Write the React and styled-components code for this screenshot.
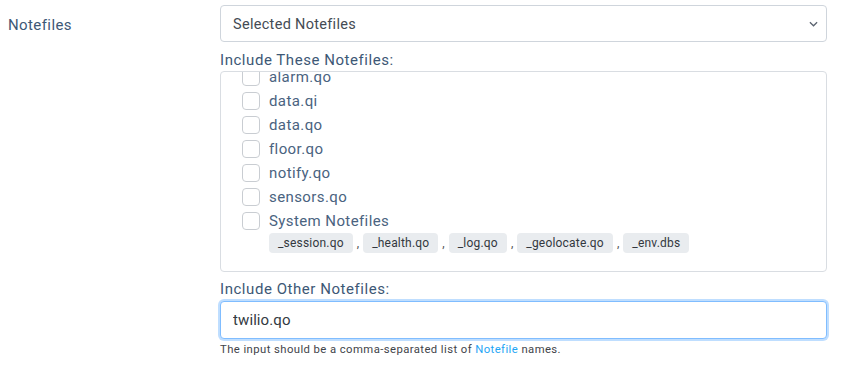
import React, { useEffect, useRef } from 'react'
import styled, { createGlobalStyle } from 'styled-components'

const notefiles = ['alarm.qo', 'data.qi', 'data.qo', 'floor.qo', 'notify.qo', 'sensors.qo']
const systemFiles = ['_session.qo', '_health.qo', '_log.qo', '_geolocate.qo', '_env.dbs']

const App = () => {
  const listRef = useRef(null)

  useEffect(() => {
    if (listRef.current) listRef.current.scrollTop = 15
  }, [])

  return (
    <>
      <GlobalStyle />
      <FormRow>
        <Label>Notefiles</Label>
        <Fields>
          <SelectWrap>
            <Select defaultValue="selected">
              <option value="all">All Notefiles</option>
              <option value="selected">Selected Notefiles</option>
            </Select>
            <Chevron viewBox="0 0 10 6">
              <path d="M1 1l4 4 4-4" fill="none" stroke="#5b6470" strokeWidth="1.4" />
            </Chevron>
          </SelectWrap>

          <SubLabel>Include These Notefiles:</SubLabel>
          <ListBox ref={listRef}>
            <ListInner>
              {notefiles.map((name) => (
                <CheckRow key={name}>
                  <Box />
                  <CheckText>{name}</CheckText>
                </CheckRow>
              ))}
              <CheckRow>
                <Box />
                <CheckText>System Notefiles</CheckText>
              </CheckRow>
              <TagRow>
                {systemFiles.map((name, i) => (
                  <React.Fragment key={name}>
                    <Tag>{name}</Tag>
                    {i < systemFiles.length - 1 && <Comma>,</Comma>}
                  </React.Fragment>
                ))}
              </TagRow>
            </ListInner>
          </ListBox>

          <SubLabel $second>Include Other Notefiles:</SubLabel>
          <Input defaultValue="twilio.qo" autoFocus />
          <Help>
            The input should be a comma-separated list of <a href="#">Notefile</a> names.
          </Help>
        </Fields>
      </FormRow>
    </>
  )
}

export default App

const GlobalStyle = createGlobalStyle`
body {
  margin: 0;
  background: #fff;
  font-family: Roboto, "Liberation Sans", sans-serif;
}
* { box-sizing: border-box; }
`

const FormRow = styled.div`
display: flex;
padding: 5px 0 0 8px;
width: 842px;
`

const Label = styled.div`
width: 212px;
flex-shrink: 0;
padding-top: 10px;
font-size: 15px;
line-height: 20px;
letter-spacing: 0.4px;
color: #3d5876;
`

const Fields = styled.div`
width: 607px;
display: flex;
flex-direction: column;
`

const SelectWrap = styled.div`
position: relative;
height: 37px;
`

const Select = styled.select`
appearance: none;
width: 100%;
height: 37px;
border: 1px solid #cfd5dc;
border-radius: 4px;
background: #fff;
padding: 1px 30px 0 12px;
font-family: Roboto, "Liberation Sans", sans-serif;
font-size: 14.5px;
letter-spacing: 0.3px;
color: #444b54;
outline: none;
`

const Chevron = styled.svg`
position: absolute;
right: 9px;
top: 16px;
width: 9px;
height: 6px;
pointer-events: none;
`

const SubLabel = styled.div`
margin-top: ${(p) => (p.$second ? '7px' : '8px')};
font-size: 15px;
line-height: 20px;
letter-spacing: 0.55px;
color: #3d5876;
`

const ListBox = styled.div`
margin-top: 1px;
height: 201px;
border: 1px solid #d9dde2;
border-radius: 4px;
overflow: hidden;
`

const ListInner = styled.div`
padding: 8px 0 40px 21px;
`

const CheckRow = styled.div`
display: flex;
align-items: center;
height: 24px;
`

const Box = styled.span`
width: 18px;
height: 18px;
border: 1.5px solid #c9cdd2;
border-radius: 4px;
background: #fff;
flex-shrink: 0;
`

const CheckText = styled.span`
margin-left: 9px;
font-size: 15px;
letter-spacing: 0.4px;
color: #4a6380;
`

const TagRow = styled.div`
display: flex;
align-items: center;
padding-left: 27px;
`

const Tag = styled.span`
height: 20px;
line-height: 20px;
padding: 0 9px;
background: #e9ecef;
border-radius: 4px;
font-size: 12px;
letter-spacing: 0.2px;
color: #33383e;
`

const Comma = styled.span`
margin: 0 4px 0 4px;
font-size: 12px;
color: #555;
`

const Input = styled.input`
margin-top: 2px;
height: 38px;
width: 100%;
border: 1px solid #80bdff;
border-radius: 4px;
box-shadow: 0 0 0 2px rgba(0, 123, 255, 0.25);
padding: 0 12px;
font-family: Roboto, "Liberation Sans", sans-serif;
font-size: 15px;
letter-spacing: 0.1px;
color: #333a42;
outline: none;
`

const Help = styled.div`
margin-top: 4px;
font-size: 11.3px;
line-height: 14px;
letter-spacing: 0.42px;
color: #3f444a;

a {
  color: #1ea5f5;
  text-decoration: none;
}
`
